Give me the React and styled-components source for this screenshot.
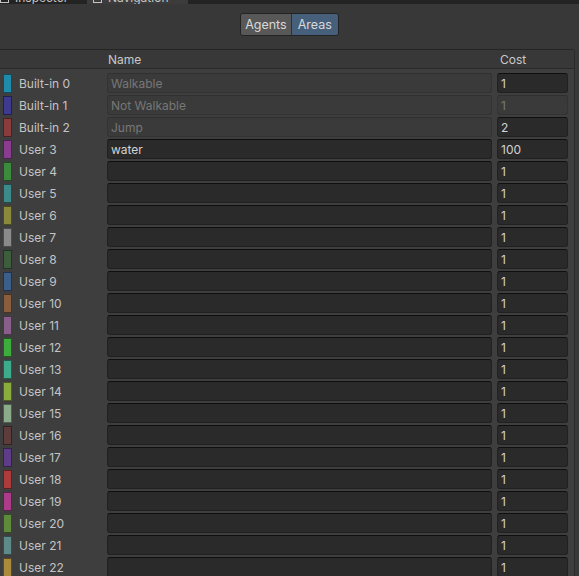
import React from 'react'
import styled, { createGlobalStyle } from 'styled-components'

const Global = createGlobalStyle`
    html, body {
        margin: 0;
        padding: 0;
        background: #383838;
        overflow: hidden;
    }
    body {
        font-family: Inter, "Noto Sans", sans-serif;
        font-size: 12px;
        color: #c4c4c4;
    }
`

const Window = styled.div`
    width: 579px;
    height: 576px;
    display: flex;
    flex-direction: column;
    background: #383838;
    overflow: hidden;
`

const TabStrip = styled.div`
    flex: none;
    height: 4px;
    display: flex;
    align-items: flex-end;
    background: #232323;
    overflow: hidden;
`

const Tab = styled.div`
    height: 12px;
    flex: none;
    width: ${p => p.w}px;
    display: flex;
    align-items: center;
    padding-left: ${p => p.pl || 0}px;
    box-sizing: border-box;
    gap: 6px;
    background: ${p => (p.active ? '#3c3c3c' : 'transparent')};
    color: #c4c4c4;
    font-size: 12px;
    line-height: 12px;
`

const TabIcon = styled.span`
    width: 9px;
    height: 9px;
    border: 1px solid #c4c4c4;
    box-sizing: border-box;
`

const Toolbar = styled.div`
    flex: none;
    display: flex;
    justify-content: center;
    padding: 9px 0 13px 0;
`

const Toggle = styled.div`
    display: flex;
    border: 1px solid #232323;
    border-radius: 3px;
    overflow: hidden;
`

const ToggleButton = styled.div`
    height: 21px;
    padding: 0 ${p => p.px}px;
    display: flex;
    align-items: center;
    font-size: 12.5px;
    color: #d8d8d8;
    background: ${p => (p.active ? '#46607c' : '#585858')};
    & + & {
        border-left: 1px solid #303030;
    }
`

const Panel = styled.div`
    flex: 1;
    min-height: 0;
    margin-right: 4px;
    border-top: 1px solid #242424;
    border-right: 1px solid #2a2a2a;
    border-top-right-radius: 3px;
    background: #3e3e3e;
    display: flex;
    flex-direction: column;
`

const HeaderRow = styled.div`
    flex: none;
    height: 18px;
    display: grid;
    grid-template-columns: 108px 392px 1fr;
    align-items: center;
    background: #383838;
    border-bottom: 1px solid #2a2a2a;
    color: #c8c8c8;
`

const Rows = styled.div`
    display: flex;
    flex-direction: column;
    gap: 2px;
    padding-top: 4px;
`

const Row = styled.div`
    flex: none;
    height: 20px;
    display: grid;
    grid-template-columns: 3px 9px 7px 88px 385px 5px 71px;
    align-items: center;
`

const Swatch = styled.div`
    grid-column: 2;
    width: 9px;
    height: 19px;
    box-sizing: border-box;
    background: ${p => p.color};
    border: 1px solid rgba(0, 0, 0, 0.45);
`

const Label = styled.div`
    grid-column: 4;
    color: #c4c4c4;
    white-space: nowrap;
    padding-top: 1px;
`

const Field = styled.div`
    grid-column: ${p => p.col};
    height: 20px;
    box-sizing: border-box;
    border-radius: 3px;
    padding: 1px 0 0 3px;
    display: flex;
    align-items: center;
    font-size: 12px;
    background: ${p => (p.disabled ? '#3a3a3a' : '#2a2a2a')};
    border: 1px solid ${p => (p.disabled ? '#333333' : '#212121')};
    border-top-color: ${p => (p.disabled ? '#303030' : '#0f0f0f')};
    color: ${p => (p.disabled ? '#777777' : '#d2d2d2')};
`

const areas = [
    ['Built-in 0', '#1f8bab', 'Walkable', '1', true, false],
    ['Built-in 1', '#3d3a90', 'Not Walkable', '1', true, true],
    ['Built-in 2', '#8a3c3c', 'Jump', '2', true, false],
    ['User 3', '#8a3c90', 'water', '100', false, false],
    ['User 4', '#3c8a3c'],
    ['User 5', '#3c8a8a'],
    ['User 6', '#8a8a3c'],
    ['User 7', '#8a8a8a'],
    ['User 8', '#3c5e3c'],
    ['User 9', '#3c5e8a'],
    ['User 10', '#8a5e3c'],
    ['User 11', '#8a5e8a'],
    ['User 12', '#3cac3c'],
    ['User 13', '#3cac8a'],
    ['User 14', '#8aac3c'],
    ['User 15', '#8aac8a'],
    ['User 16', '#5e3c3c'],
    ['User 17', '#5e3c8a'],
    ['User 18', '#ac3c3c'],
    ['User 19', '#ac3c8a'],
    ['User 20', '#5e8a3c'],
    ['User 21', '#5e8a8a'],
    ['User 22', '#ac8a3c'],
    ['User 23', '#ac8a8a'],
]

export default function App() {
    return (
        <Window>
            <Global />
            <TabStrip>
                <Tab w={87} pl={0}>
                    <TabIcon />
                    Inspector
                </Tab>
                <Tab w={101} pl={6} active>
                    <TabIcon />
                    Navigation
                </Tab>
            </TabStrip>
            <Toolbar>
                <Toggle>
                    <ToggleButton px={4}>Agents</ToggleButton>
                    <ToggleButton px={6} active>Areas</ToggleButton>
                </Toggle>
            </Toolbar>
            <Panel>
                <HeaderRow>
                    <span />
                    <span>Name</span>
                    <span>Cost</span>
                </HeaderRow>
                <Rows>
                    {areas.map(([label, color, name = '', cost = '1', nameDisabled, costDisabled]) => (
                        <Row key={label}>
                            <Swatch color={color} />
                            <Label>{label}</Label>
                            <Field col={5} disabled={nameDisabled}>{name}</Field>
                            <Field col={7} disabled={costDisabled}>{cost}</Field>
                        </Row>
                    ))}
                </Rows>
            </Panel>
        </Window>
    )
}
